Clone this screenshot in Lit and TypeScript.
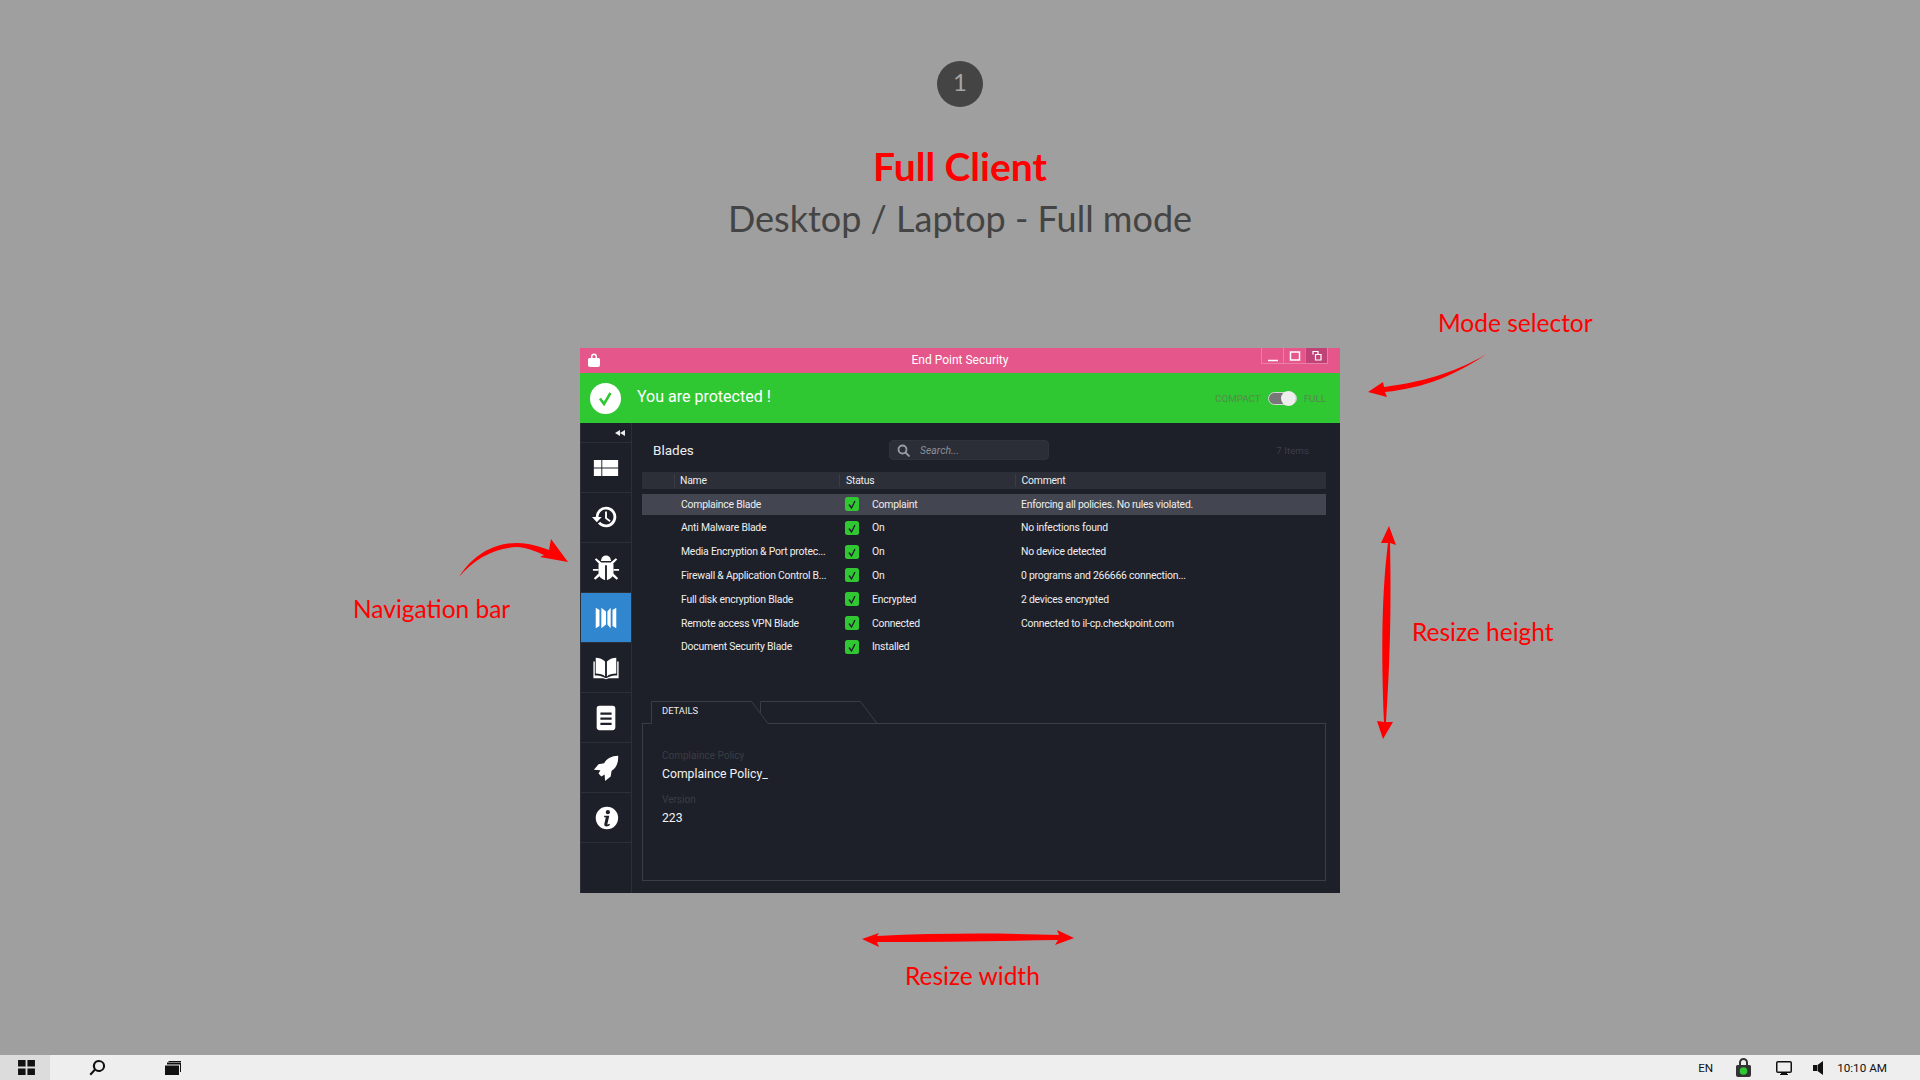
import { LitElement, html, css, svg } from 'lit';
import { customElement } from 'lit/decorators.js';

const rows = [
  ['Complaince Blade', 'Complaint', 'Enforcing all policies. No rules violated.'],
  ['Anti Malware Blade', 'On', 'No infections found'],
  ['Media Encryption & Port protec...', 'On', 'No device detected'],
  ['Firewall & Application Control B...', 'On', '0 programs and 266666 connection...'],
  ['Full disk encryption Blade', 'Encrypted', '2 devices encrypted'],
  ['Remote access VPN Blade', 'Connected', 'Connected to il-cp.checkpoint.com'],
  ['Document Security Blade', 'Installed', ''],
];

const navIcons = [
  svg`<path d="M2 9h8v8H2zM11 9h17v8H11zM2 18h8v8H2zM11 18h17v8H11z" transform="translate(0 -2.500)"/>`,
  svg`<path d="M15 3a11 11 0 1 1-8.600 17.800l2.400-1.900A8 8 0 1 0 7 14h3.400L5.200 19.600 0 14h4A11 11 0 0 1 15 3z"/><path d="M14 8h2v6.600l4 3-1.200 1.600-4.800-3.600z"/>`,
  svg`<path d="M10 6a5 4.500 0 0 1 10 0l.5 1.500h-11zM8 9h14l1 2v10c0 3-3 6-7 7V12h-2v16c-4-1-7-4-7-7V11z"/><path d="M8 11 3 6l1.500-1.500L10 9zM22 11l5-5-1.500-1.500L20 9zM7 16H1v2h6zM23 16h6v2h-6zM7 21l-5 5 1.500 1.500L9 23zM23 21l5 5-1.500 1.500L21 23z"/>`,
  svg`<path d="M4 4l4 2.500v17L4 26zM10 4l5 4v14l-5 4zM26 4l-4 2.500v17l4 2.500zM20 4l-3.500 4v14l3.500 4z"/>`,
  svg`<path d="M14 8C11 5 7 4 4 4v17c4 0 8 1 10 3zM16 8c3-3 7-4 10-4v17c-4 0-8 1-10 3z"/><path d="M1.500 8H3v15c4 0 8 .5 12 3 4-2.500 8-3 12-3V8h1.500v18H18l-3 1-3-1H1.500z"/>`,
  svg`<path fill-rule="evenodd" d="M8 2h14a3 3 0 0 1 3 3v20a3 3 0 0 1-3 3H8a3 3 0 0 1-3-3V5a3 3 0 0 1 3-3zm1 7v2.500h12V9zm0 5.500V17h12v-2.500zM9 20v2.500h12V20z"/>`,
  svg`<path d="M28 2c-7 0-12 3-15 8l-6 1-5 6 7 .5L7 21l3 3 3.500-2 .5 7 6-5 1-6c5-3 7.500-9 7-16z"/>`,
  svg`<path fill-rule="evenodd" transform="translate(1 0)" d="M15 3a12 12 0 1 1 0 24 12 12 0 0 1 0-24zm1 3.500a2.300 2.300 0 1 0 0 4.600 2.300 2.300 0 0 0 0-4.600zM12 12.500v1.800h1.800l-1.600 7c-.3 1.700.7 2.700 2.300 2.700 1.700 0 3-.8 3.800-1.800l-.9-1c-.5.400-1.200.8-1.600.8-.3 0-.4-.2-.3-.6l2-8.900z"/>`,
];

@customElement('app-root')
export class AppRoot extends LitElement {
  static styles = css`
    :host {
      display: flex;
      flex-direction: column;
      position: relative;
      width: 1920px;
      height: 1080px;
      overflow: hidden;
      background: #9f9f9f;
      font-family: Roboto, 'Noto Sans', sans-serif;
    }
    .hand { font-family: Lato, 'Noto Sans', sans-serif; }

    .intro {
      height: 348px;
      box-sizing: border-box;
      padding-top: 61px;
      display: flex;
      flex-direction: column;
      align-items: center;
    }
    .step {
      width: 46px;
      height: 46px;
      border-radius: 50%;
      background: #444;
      color: #a5a5a5;
      font-size: 24px;
      line-height: 42px;
      display: flex;
      justify-content: center;
    }
    .title {
      margin-top: 34px;
      color: #f00;
      font-size: 39px;
      line-height: 50px;
      font-weight: 700;
    }
    .sub {
      color: #444;
      font-size: 36px;
      line-height: 52px;
      margin-top: 1px;
    }

    .window {
      width: 760px;
      height: 545px;
      margin: 0 auto;
      display: flex;
      flex-direction: column;
      background: #1e2029;
      color: #eee;
    }
    .titlebar {
      height: 25px;
      flex: none;
      background: #e5568a;
      display: flex;
      align-items: center;
      justify-content: space-between;
      position: relative;
      color: #fff;
      font-size: 12px;
    }
    .lock { width: 12px; height: 14px; margin-left: 8px; margin-top: -1px; fill: #fff; }
    .wintitle { position: absolute; left: 0; right: 0; top: 5px; line-height: 14px; text-align: center; }
    .controls {
      align-self: flex-start;
      display: flex;
      height: 15px;
      margin-right: 12px;
      border: 1px solid rgba(255, 255, 255, 0.25);
      border-top: 0;
      z-index: 1;
    }
    .controls span {
      width: 21px;
      display: flex;
      align-items: center;
      justify-content: center;
      border-left: 1px solid rgba(255, 255, 255, 0.25);
    }
    .controls span:first-child { border-left: 0; }
    .controls span.on { background: #bf4377; }
    .controls svg { width: 12px; height: 12px; fill: none; stroke: #fff; }

    .status {
      height: 50px;
      flex: none;
      background: #2fc832;
      display: flex;
      align-items: center;
      padding: 0 14px 0 10px;
    }
    .okmark { width: 31px; height: 31px; }
    .status b {
      font-weight: 400;
      color: #fff;
      font-size: 16px;
      margin-left: 16px;
      margin-top: -4px;
    }
    .mode {
      margin-left: auto;
      display: flex;
      align-items: center;
      gap: 7px;
      color: #558a50;
      font-size: 9.800px;
    }
    .toggle {
      width: 29px;
      height: 13px;
      box-sizing: border-box;
      border: 1px solid #d5d5d5;
      border-radius: 7px;
      background: #777;
      display: flex;
      align-items: center;
      justify-content: flex-end;
    }
    .toggle i {
      width: 15px;
      height: 15px;
      flex: none;
      border-radius: 50%;
      background: #eee;
    }

    .body { flex: 1; display: flex; min-height: 0; }
    .nav {
      width: 52px;
      flex: none;
      box-sizing: border-box;
      border-left: 1px solid #2c2f38;
      border-right: 1px solid #2c2f38;
      display: flex;
      flex-direction: column;
    }
    .collapse {
      height: 20px;
      flex: none;
      box-sizing: border-box;
      display: flex;
      align-items: center;
      justify-content: flex-end;
      padding-right: 6px;
      border-bottom: 1px solid #2c2f38;
    }
    .collapse svg { width: 10px; height: 6px; fill: #eee; }
    .navitem {
      height: 50px;
      flex: none;
      box-sizing: border-box;
      display: flex;
      align-items: center;
      justify-content: center;
      border-bottom: 1px solid #2c2f38;
    }
    .navitem.active { background: #3187cf; }
    .navitem svg { width: 28px; height: 28px; fill: #fff; }

    .content {
      flex: 1;
      min-width: 0;
      box-sizing: border-box;
      padding: 17px 14px 12px 10px;
      display: flex;
      flex-direction: column;
    }
    .toolbar {
      height: 20px;
      flex: none;
      display: flex;
      align-items: center;
      margin-bottom: 12px;
    }
    .toolbar h2 {
      margin: 0 0 0 11px;
      width: 236px;
      font-weight: 400;
      font-size: 13.500px;
    }
    .search {
      width: 160px;
      height: 20px;
      box-sizing: border-box;
      border: 1px solid #30333c;
      border-radius: 4px;
      background: #2b2e37;
      display: flex;
      align-items: center;
      padding-left: 7px;
      gap: 10px;
      color: #8d9097;
      font-size: 10.400px;
      font-style: italic;
    }
    .search svg { width: 13px; height: 13px; fill: none; stroke: #9a9da3; stroke-width: 1.800; }
    .count { margin-left: auto; margin-right: 17px; color: #3b3e47; font-size: 9.800px; }

    .thead, .row {
      display: grid;
      grid-template-columns: 32px 165px 175.500px 1fr;
      align-items: center;
      font-size: 10.400px;
      letter-spacing: -0.22px;
    }
    .thead {
      height: 17px;
      background: #2c2f38;
      margin-bottom: 5px;
    }
    .thead span { border-left: 1px solid #3a3d46; padding-left: 6px; line-height: 13px; }
    .thead span:first-child { border: 0; }
    .thead span:nth-child(2) { padding-left: 5px; }
    .row { height: 23.830px; }
    .row.sel { background: #434651; height: 21px; margin-bottom: 0.800px; padding-bottom: 1px; box-sizing: border-box; }
    .row .name { padding-left: 7px; white-space: nowrap; overflow: hidden; }
    .row .state { display: flex; align-items: center; gap: 13px; padding-left: 6px; }
    .row .note { padding-left: 6.500px; white-space: nowrap; }
    .check { width: 14px; height: 14px; flex: none; }

    .details { margin-top: auto; flex: none; }
    .tabs { position: relative; height: 22px; }
    .tabs svg { position: absolute; left: 0; top: 0; width: 684px; height: 23px; fill: none; stroke: #3a3d46; }
    .tabs span {
      position: absolute;
      left: 20px;
      top: 3px;
      font-size: 9.400px;
      line-height: 14px;
    }
    .panel {
      height: 158px;
      box-sizing: border-box;
      border: 1px solid #3a3d46;
      border-top: 0;
      padding: 26px 19px 0;
    }
    .panel label { display: block; color: #3a3d46; font-size: 10px; line-height: 14px; }
    .panel p { margin: 2px 0 10px; font-size: 12.200px; line-height: 18px; color: #f2f2f2; }

    .taskbar {
      margin-top: auto;
      height: 25px;
      flex: none;
      background: #eee;
      display: flex;
      align-items: center;
      color: #111;
      font-size: 11.700px;
    }
    .taskbar svg { fill: #111; flex: none; }
    .start {
      width: 50px;
      height: 25px;
      box-sizing: border-box;
      padding-left: 18px;
      background: #dcdcdc;
      display: flex;
      align-items: center;
    }
    .tray { margin-left: auto; display: flex; align-items: center; }
    .tray .clock { margin-left: 14px; margin-right: 33px; }

    .note-label {
      position: absolute;
      color: #f00;
      font-size: 24.500px;
      line-height: 30px;
      white-space: nowrap;
    }
    .arrows { position: absolute; inset: 0; width: 1920px; height: 1080px; fill: #f00; pointer-events: none; }
  `;

  render() {
    return html`
      <header class="intro hand">
        <div class="step">1</div>
        <div class="title">Full Client</div>
        <div class="sub">Desktop / Laptop - Full mode</div>
      </header>

      <section class="window">
        <div class="titlebar">
          <svg class="lock" viewBox="0 0 12 14"><path fill-rule="evenodd" d="M3 5V3.500a3 3 0 0 1 6 0V5h1.500A1.500 1.500 0 0 1 12 6.500V12a2 2 0 0 1-2 2H2a2 2 0 0 1-2-2V6.500A1.500 1.500 0 0 1 1.500 5zm1.500 0h3V3.500a1.500 1.500 0 0 0-3 0z"/></svg>
          <span class="wintitle">End Point Security</span>
          <div class="controls">
            <span><svg viewBox="0 0 12 12"><path d="M1 10.500h10" stroke-width="1.500"/></svg></span>
            <span><svg viewBox="0 0 12 12"><path d="M1.500 2h9v8h-9z" stroke-width="1.500"/></svg></span>
            <span class="on"><svg viewBox="0 0 12 12"><path d="M2 4.500v-3h5v3M4.500 4.500h5.500v5.500H4.500z" stroke-width="1.200"/></svg></span>
          </div>
        </div>

        <div class="status">
          <svg class="okmark" viewBox="0 0 31 31"><circle cx="15.500" cy="15.500" r="15.500" fill="#fff"/><path d="M10 15.500l4 5.500 6.500-11" fill="none" stroke="#2fc832" stroke-width="2.600"/></svg>
          <b>You are protected !</b>
          <div class="mode">
            <span>COMPACT</span>
            <div class="toggle"><i></i></div>
            <span>FULL</span>
          </div>
        </div>

        <div class="body">
          <nav class="nav">
            <div class="collapse"><svg viewBox="0 0 10 6"><path d="M5 0v6L0 3zM10 0v6L5 3z"/></svg></div>
            ${navIcons.map((icon, i) => html`
              <div class="navitem ${i === 3 ? 'active' : ''}"><svg viewBox="0 0 30 30">${icon}</svg></div>
            `)}
          </nav>

          <main class="content">
            <div class="toolbar">
              <h2>Blades</h2>
              <div class="search">
                <svg viewBox="0 0 13 13"><circle cx="5.500" cy="5.500" r="4"/><path d="M8.500 8.500l4 4"/></svg>
                <span>Search...</span>
              </div>
              <span class="count">7 Items</span>
            </div>

            <div class="thead">
              <span></span><span>Name</span><span>Status</span><span>Comment</span>
            </div>
            ${rows.map((r, i) => html`
              <div class="row ${i === 0 ? 'sel' : ''}">
                <span></span>
                <span class="name">${r[0]}</span>
                <span class="state">
                  <svg class="check" viewBox="0 0 14 14"><rect width="14" height="14" rx="2.500" fill="#2fc832"/><path d="M4 7.500l2.500 3.500 3.500-7" fill="none" stroke="#1e2029" stroke-width="1.400"/></svg>
                  ${r[1]}
                </span>
                <span class="note">${r[2]}</span>
              </div>
            `)}

            <div class="details">
              <div class="tabs">
                <svg viewBox="0 0 684 23"><path d="M0 22.500H9.500V.5H109.500L126 22.500H684M118.500 11.500V.5H218.500L235 22.500"/></svg>
                <span>DETAILS</span>
              </div>
              <div class="panel">
                <label>Complaince Policy</label>
                <p>Complaince Policy_</p>
                <label>Version</label>
                <p>223</p>
              </div>
            </div>
          </main>
        </div>
      </section>

      <footer class="taskbar">
        <div class="start">
          <svg width="17" height="15" viewBox="0 0 18 16"><path d="M0 0h8v7H0zM10 0h8v7h-8zM0 9h8v7H0zM10 9h8v7h-8z"/></svg>
        </div>
        <svg style="margin-left:39px" width="16" height="16" viewBox="0 0 16 16"><path fill-rule="evenodd" d="M10 0a6 6 0 1 1-3.700 10.700L2 15.500.500 14l4.400-4.700A6 6 0 0 1 10 0zm0 2a4 4 0 1 0 0 8 4 4 0 0 0 0-8z"/></svg>
        <svg style="margin-left:60px" width="16" height="14" viewBox="0 0 16 14"><path d="M0 4.500h14V14H0zM2 1.500h14V11h-1V3.500H2zM3.500 0H16v1H3.500z"/></svg>
        <div class="tray">
          <span>EN</span>
          <svg style="margin-left:23px" width="15" height="19" viewBox="0 0 15 19"><path fill-rule="evenodd" d="M3 7V4.500a4.500 4.500 0 0 1 9 0V7h1.500A1.500 1.500 0 0 1 15 8.500V17a2 2 0 0 1-2 2H2a2 2 0 0 1-2-2V8.500A1.500 1.500 0 0 1 1.500 7zm2 0h5V4.500a2.500 2.500 0 0 0-5 0z" fill="#333"/><circle cx="7.500" cy="13" r="3.800" fill="#2fc832"/></svg>
          <svg style="margin-left:25px" width="16" height="14" viewBox="0 0 16 14"><path fill-rule="evenodd" d="M2 0h12a2 2 0 0 1 2 2v8a2 2 0 0 1-2 2h-3v1h1v1H4v-1h1v-1H2a2 2 0 0 1-2-2V2a2 2 0 0 1 2-2zm0 1.500a.5.500 0 0 0-.5.500v8a.5.500 0 0 0 .5.500h12a.5.500 0 0 0 .5-.5V2a.5.500 0 0 0-.5-.5z"/></svg>
          <svg style="margin-left:21px" width="10" height="14" viewBox="0 0 10 14"><path d="M0 4h4v6H0zM4.500 4L10 0v14L4.500 10z"/></svg>
          <span class="clock">10:10 AM</span>
        </div>
      </footer>

      <span class="note-label hand" style="left:1438px;top:308px">Mode selector</span>
      <span class="note-label hand" style="left:353px;top:594px">Navigation bar</span>
      <span class="note-label hand" style="left:1412px;top:617px">Resize height</span>
      <span class="note-label hand" style="left:905px;top:961px">Resize width</span>

      <svg class="arrows" viewBox="0 0 1920 1080">
        <path d="M1487 354C1450 375 1420 382 1384 387L1383 382 1368 392 1387 397 1385 392C1425 388 1455 375 1487 354Z"/>
        <path d="M459 577C475 552 497 543 517 543 530 543 541 547 549 550L551 539 568 562 540 557 544 555C535 551 525 547 517 547 495 548 475 558 459 577Z"/>
        <path d="M1389 526L1396 545 1390 543C1391 590 1391 650 1386 722L1393 722 1383 739 1377 721 1384 722C1381 650 1382 590 1388 543L1381 543Z"/>
        <path d="M862 939L879 933 877 936C940 933 1000 933 1059 935L1057 930 1074 938 1055 945 1058 940C1000 941 940 942 877 942L879 947Z"/>
      </svg>
    `;
  }
}
